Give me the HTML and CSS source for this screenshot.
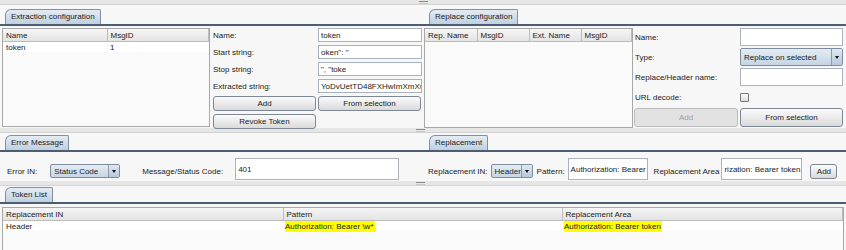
FILE: index.html
```html
<!DOCTYPE html>
<html lang="en">
<head>
  <meta charset="UTF-8">
  <title>Token extraction</title>
  <link rel="stylesheet" href="styles.css">
</head>
<body>

<div class="strip top-strip"><span class="grip"></span></div>

<div class="row top">
  <section class="pane left">
    <div class="tabs"><span class="tab">Extraction configuration</span></div>
    <div class="content">
      <div class="grid ext-grid">
        <table>
          <colgroup><col style="width:104px"><col></colgroup>
          <tr><th>Name</th><th>MsgID</th></tr>
          <tr><td>token</td><td>1</td></tr>
        </table>
      </div>
      <div class="form ext-form">
        <label>Name:</label><div class="field">token</div>
        <label>Start string:</label><div class="field">oken": "</div>
        <label>Stop string:</label><div class="field">", "toke</div>
        <label>Extracted string:</label><div class="field">YoDvUetTD48FXHwImXmXw</div>
        <button>Add</button><button>From selection</button>
        <button>Revoke Token</button>
      </div>
    </div>
  </section>

  <section class="pane right">
    <div class="tabs"><span class="tab">Replace configuration</span></div>
    <div class="content">
      <div class="grid rep-grid">
        <table>
          <colgroup><col style="width:52px"><col style="width:52px"><col style="width:52px"><col></colgroup>
          <tr><th>Rep. Name</th><th>MsgID</th><th>Ext. Name</th><th>MsgID</th></tr>
        </table>
      </div>
      <div class="form rep-form">
        <label>Name:</label><div class="field"></div>
        <label>Type:</label><div class="combo">Replace on selected<span class="arrow"></span></div>
        <label>Replace/Header name:</label><div class="field"></div>
        <label>URL decode:</label><div class="check-cell"><span class="check"></span></div>
        <button disabled>Add</button><button>From selection</button>
      </div>
    </div>
  </section>
</div>

<div class="strip split"><span class="grip"></span></div>

<div class="row middle">
  <section class="pane left">
    <div class="tabs"><span class="tab">Error Message</span></div>
    <div class="content line error-line">
      <span class="lbl">Error IN:</span>
      <div class="combo status-combo">Status Code<span class="arrow"></span></div>
      <span class="lbl msg-lbl">Message/Status Code:</span>
      <div class="field msg-field">401</div>
    </div>
  </section>
  <section class="pane right">
    <div class="tabs"><span class="tab">Replacement</span></div>
    <div class="content line repl-line">
      <span class="lbl in-lbl">Replacement IN:</span>
      <div class="combo header-combo">Header<span class="arrow"></span></div>
      <span class="lbl pat-lbl">Pattern:</span>
      <div class="field pat-field">Authorization: Bearer</div>
      <span class="lbl area-lbl">Replacement Area</span>
      <div class="field area-field">rization: Bearer token</div>
      <button class="small-btn">Add</button>
    </div>
  </section>
</div>

<div class="strip split"><span class="grip"></span></div>

<section class="pane bottom">
  <div class="tabs"><span class="tab">Token List</span></div>
  <div class="content">
    <div class="grid token-grid">
      <table>
        <colgroup><col style="width:280px"><col style="width:279px"><col></colgroup>
        <tr><th>Replacement IN</th><th>Pattern</th><th>Replacement Area</th></tr>
        <tr><td>Header</td><td><mark>Authorization: Bearer \w*</mark></td><td><mark>Authorization: Bearer token</mark></td></tr>
      </table>
    </div>
  </div>
</section>

</body>
</html>
```

FILE: styles.css
```css
body {
  margin: 0;
  width: 846px;
  height: 250px;
  overflow: hidden;
  background: #eeeeee;
  font-family: "Liberation Sans", Arial, sans-serif;
  font-size: 8px;
  color: #222;
}

/* split pane dividers */
.strip {
  display: flex;
  align-items: center;
  justify-content: center;
  background: #e6e6e6;
  border-bottom: 1px solid #d2d2d2;
}
.top-strip {
  height: 4px;
}
.split {
  height: 4px;
  border-top: 1px solid #f8f8f8;
}
.grip {
  width: 9px;
  height: 1px;
  margin-left: -6px;
  border-top: 1px solid #8a8a8a;
  border-bottom: 1px solid #c9c9c9;
}
.top-strip .grip {
  margin-left: 0;
}

.row {
  display: flex;
}
.top {
  height: 122px;
}
.middle {
  height: 47px;
}

/* tabbed panes */
.pane {
  display: flex;
  flex-direction: column;
  background: #f7f7f7;
}
.pane.left {
  width: 423px;
}
.pane.right {
  flex: 1;
}
.pane.bottom {
  height: 65px;
}
.tabs {
  display: flex;
  align-items: flex-end;
  padding: 4px 0 0 5px;
  border-bottom: 2px solid #4d5d73;
}
.middle .tabs {
  padding-top: 2px;
}
.bottom .tabs {
  padding-top: 1px;
}
.pane.right .tabs {
  padding-left: 6px;
}
.tab {
  height: 14px;
  line-height: 14px;
  padding: 0 5px;
  border: 1px solid #7f90a3;
  border-bottom: none;
  border-radius: 6px 2px 0 0;
  background: linear-gradient(#e4ecf4, #bfd0e0);
  color: #222;
}
.content {
  flex: 1;
  display: flex;
  padding: 2px 1px 0 2px;
}
.pane.right .content {
  padding: 2px 3px 0 1px;
}

/* tables */
.grid {
  border: 1px solid #a8a8a8;
  background: #fafafa;
  overflow: hidden;
}
.ext-grid {
  width: 206px;
  height: 97px;
}
.rep-grid {
  width: 207px;
  height: 98px;
}
.token-grid {
  flex: 1;
  height: 42px;
  margin-top: 1px;
  margin-right: 1px;
}
table {
  border-collapse: collapse;
  width: 100%;
  table-layout: fixed;
}
th {
  height: 12px;
  padding: 0 3px;
  text-align: left;
  font-weight: normal;
  background: linear-gradient(#f6f6f6, #e3e3e3);
  border-right: 1px solid #bcbcbc;
  border-bottom: 1px solid #bcbcbc;
  white-space: nowrap;
}
td {
  height: 10px;
  padding: 0 3px;
  background: #fff;
  white-space: nowrap;
}
mark {
  background: #ffff00;
  color: #222;
  padding: 1px 1px 1px 0;
  margin-left: -1px;
}

/* forms */
.form {
  display: grid;
  align-items: center;
  align-content: start;
}
.ext-form {
  width: 210px;
  margin-left: 2px;
  grid-template-columns: 104px 104px;
  grid-template-rows: 14px 14px 14px 14px 15px 15px;
  column-gap: 2px;
  row-gap: 3px;
}
.ext-form label {
  padding-left: 1px;
}
.rep-form {
  flex: 1;
  margin-left: 1px;
  grid-template-columns: 104px 103px;
  grid-template-rows: 18px 18px 18px 18px 19px;
  column-gap: 2px;
  row-gap: 2px;
}
.rep-form label {
  padding-left: 1px;
}
.field {
  height: 100%;
  box-sizing: border-box;
  border: 1px solid #a9b3bd;
  background: #fff;
  padding: 0 2px;
  display: flex;
  align-items: center;
  white-space: nowrap;
  overflow: hidden;
}
.combo {
  position: relative;
  height: 100%;
  box-sizing: border-box;
  border: 1px solid #7d8c9c;
  border-radius: 2px;
  background: linear-gradient(#e4ecf3, #c6d5e3);
  padding: 0 14px 0 3px;
  display: flex;
  align-items: center;
  white-space: nowrap;
  color: #222;
}
.arrow {
  position: absolute;
  top: 0;
  right: 0;
  bottom: 0;
  width: 10px;
  border-left: 1px solid #8d9baa;
  background: linear-gradient(#dfe8f1, #b7c9da);
}
.arrow::after {
  content: "";
  position: absolute;
  left: 3px;
  top: 50%;
  margin-top: -1px;
  border-left: 2px solid transparent;
  border-right: 2px solid transparent;
  border-top: 3px solid #111;
}
.check-cell {
  display: flex;
  align-items: center;
}
.check {
  width: 7px;
  height: 7px;
  border: 1px solid #7a7a7a;
  border-radius: 1px;
  background: linear-gradient(#ffffff, #dcdcdc);
}
button {
  height: 100%;
  margin: 0;
  padding: 0;
  font: inherit;
  color: #222;
  border: 1px solid #7d8895;
  border-radius: 3px;
  background: linear-gradient(#fbfbfb, #dadada);
}
.ext-form button {
  margin-left: 1px;
  width: 103px;
}
.ext-form button:nth-of-type(2) {
  margin-left: 0;
}
button:disabled {
  color: #a0a0a0;
  border-color: #bcbcbc;
  background: #e2e2e2;
}

/* single line rows */
.pane .line {
  flex: none;
  height: 22px;
  padding: 6px 0 0 7px;
  align-items: center;
  white-space: nowrap;
}
.line .lbl,
.line .combo,
.line button {
  margin-top: 4px;
}
.status-combo {
  width: 70px;
  height: 14px;
  margin-left: 13px;
}
.msg-lbl {
  margin-left: 22px;
}
.msg-field {
  width: 164px;
  height: 22px;
  margin-left: 12px;
}
.pane.right .repl-line {
  padding: 6px 0 0 5px;
}
.in-lbl {
  margin-right: 3px;
}
.header-combo {
  width: 42px;
  height: 14px;
  margin-right: 4px;
}
.pat-lbl {
  margin-right: 3px;
}
.pat-field {
  width: 80px;
  height: 22px;
  margin-right: 6px;
}
.area-lbl {
  margin-right: 2px;
}
.area-field {
  width: 81px;
  height: 22px;
  margin-right: 8px;
}
.small-btn {
  width: 27px;
  height: 15px;
}
```
